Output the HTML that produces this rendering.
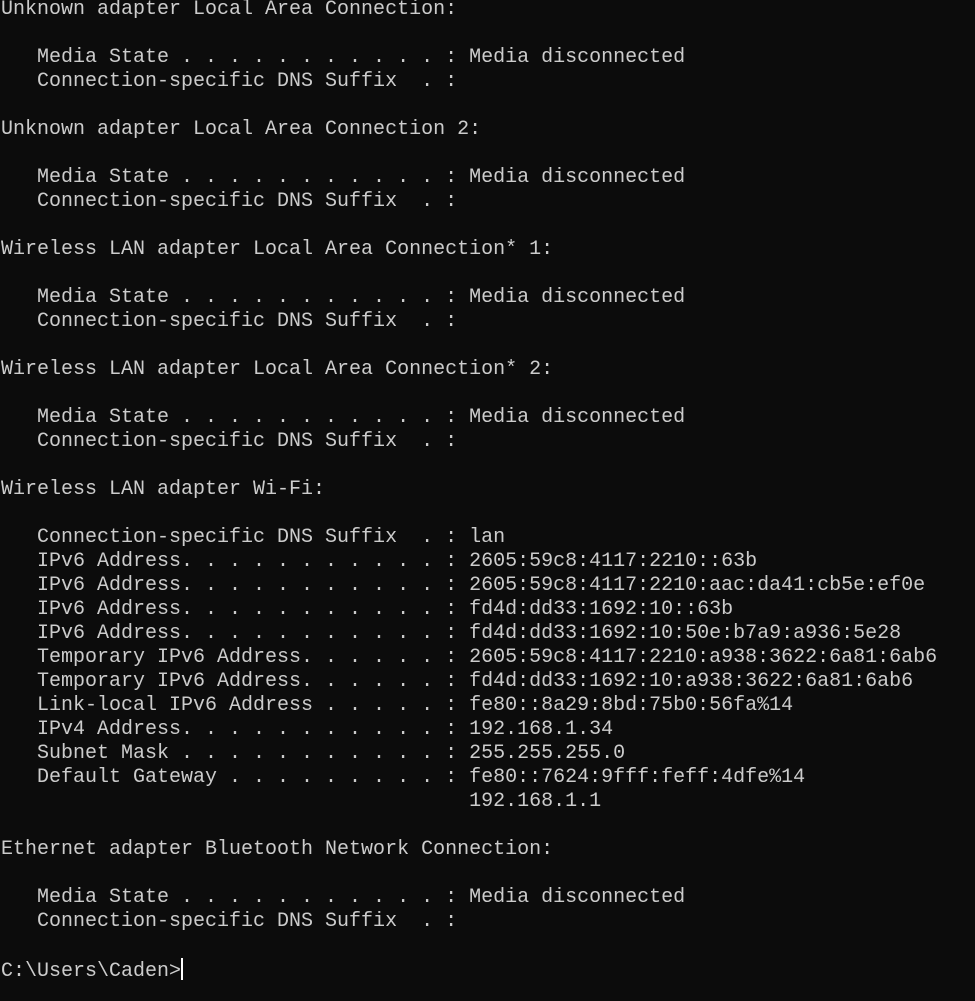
<!DOCTYPE html>
<html><head><meta charset="utf-8"><style>
html,body{margin:0;padding:0;background:#0c0c0c;width:975px;height:1001px;overflow:hidden}
pre{margin:-2px 0 0 1px;font-family:"Liberation Mono",monospace;font-size:20px;line-height:24px;color:#cccccc;white-space:pre}
.c{display:inline-block;width:2px;height:22px;background:#fff;vertical-align:-4px}
</style></head><body><pre>Unknown adapter Local Area Connection:

   Media State . . . . . . . . . . . : Media disconnected
   Connection-specific DNS Suffix  . :

Unknown adapter Local Area Connection 2:

   Media State . . . . . . . . . . . : Media disconnected
   Connection-specific DNS Suffix  . :

Wireless LAN adapter Local Area Connection* 1:

   Media State . . . . . . . . . . . : Media disconnected
   Connection-specific DNS Suffix  . :

Wireless LAN adapter Local Area Connection* 2:

   Media State . . . . . . . . . . . : Media disconnected
   Connection-specific DNS Suffix  . :

Wireless LAN adapter Wi-Fi:

   Connection-specific DNS Suffix  . : lan
   IPv6 Address. . . . . . . . . . . : 2605:59c8:4117:2210::63b
   IPv6 Address. . . . . . . . . . . : 2605:59c8:4117:2210:aac:da41:cb5e:ef0e
   IPv6 Address. . . . . . . . . . . : fd4d:dd33:1692:10::63b
   IPv6 Address. . . . . . . . . . . : fd4d:dd33:1692:10:50e:b7a9:a936:5e28
   Temporary IPv6 Address. . . . . . : 2605:59c8:4117:2210:a938:3622:6a81:6ab6
   Temporary IPv6 Address. . . . . . : fd4d:dd33:1692:10:a938:3622:6a81:6ab6
   Link-local IPv6 Address . . . . . : fe80::8a29:8bd:75b0:56fa%14
   IPv4 Address. . . . . . . . . . . : 192.168.1.34
   Subnet Mask . . . . . . . . . . . : 255.255.255.0
   Default Gateway . . . . . . . . . : fe80::7624:9fff:feff:4dfe%14
                                       192.168.1.1

Ethernet adapter Bluetooth Network Connection:

   Media State . . . . . . . . . . . : Media disconnected
   Connection-specific DNS Suffix  . :

C:\Users\Caden&gt;<span class="c"></span></pre></body></html>
